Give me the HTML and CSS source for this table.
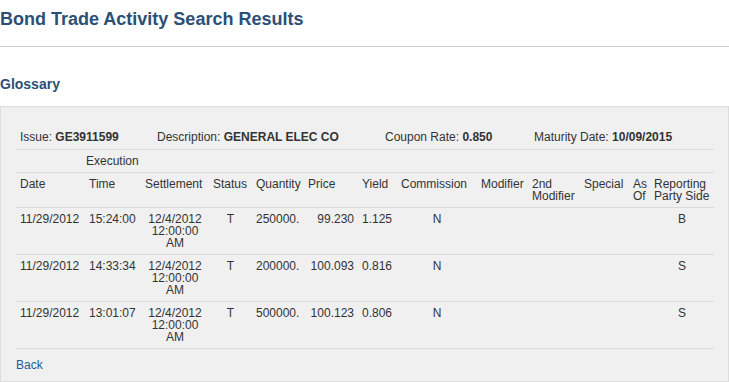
FILE: index.html
```html
<!DOCTYPE html>
<html>
<head>
	<title>Bond Trade Activity Search Results</title>
	<link rel="stylesheet" href="styles.css">
</head>
<body>
	<h1 class="page-title">Bond Trade Activity Search Results</h1>
	<h2 class="glossary">Glossary</h2>

	<div class="results">
		<table class="trades">
			<colgroup>
				<col style="width:69px">
				<col style="width:56px">
				<col style="width:68px">
				<col style="width:43px">
				<col style="width:52px">
				<col style="width:54px">
				<col style="width:39px">
				<col style="width:80px">
				<col style="width:51px">
				<col style="width:52px">
				<col style="width:49px">
				<col style="width:21px">
				<col style="width:64px">
			</colgroup>
			<tr class="issue-row">
				<td colspan="13">
					<div class="issue">
						<span class="issue-item issue-id">Issue: <b>GE3911599</b></span>
						<span class="issue-item issue-desc">Description: <b>GENERAL ELEC CO</b></span>
						<span class="issue-item issue-coupon">Coupon Rate: <b>0.850</b></span>
						<span class="issue-item">Maturity Date: <b>10/09/2015</b></span>
					</div>
				</td>
			</tr>
			<tr class="head-top">
				<th></th>
				<th class="exec">Execution</th>
				<th colspan="11"></th>
			</tr>
			<tr class="head">
				<th>Date</th>
				<th>Time</th>
				<th>Settlement</th>
				<th>Status</th>
				<th>Quantity</th>
				<th>Price</th>
				<th>Yield</th>
				<th>Commission</th>
				<th>Modifier</th>
				<th>2nd Modifier</th>
				<th>Special</th>
				<th>As Of</th>
				<th>Reporting Party Side</th>
			</tr>
			<tr>
				<td>11/29/2012</td>
				<td>15:24:00</td>
				<td class="center">12/4/2012 12:00:00 AM</td>
				<td class="center">T</td>
				<td>250000.</td>
				<td class="right">99.230</td>
				<td>1.125</td>
				<td class="center">N</td>
				<td></td>
				<td></td>
				<td></td>
				<td></td>
				<td class="center">B</td>
			</tr>
			<tr>
				<td>11/29/2012</td>
				<td>14:33:34</td>
				<td class="center">12/4/2012 12:00:00 AM</td>
				<td class="center">T</td>
				<td>200000.</td>
				<td class="right">100.093</td>
				<td>0.816</td>
				<td class="center">N</td>
				<td></td>
				<td></td>
				<td></td>
				<td></td>
				<td class="center">S</td>
			</tr>
			<tr>
				<td>11/29/2012</td>
				<td>13:01:07</td>
				<td class="center">12/4/2012 12:00:00 AM</td>
				<td class="center">T</td>
				<td>500000.</td>
				<td class="right">100.123</td>
				<td>0.806</td>
				<td class="center">N</td>
				<td></td>
				<td></td>
				<td></td>
				<td></td>
				<td class="center">S</td>
			</tr>
		</table>
		<a class="back" href="#">Back</a>
	</div>
</body>
</html>
```

FILE: styles.css
```css
body{
	margin:0;
	font-family:"Liberation Sans", Arial, sans-serif;
	color:#333;
	background-color:#fff;
}
.page-title{
	margin:8px 0 0 0;
	padding-bottom:16px;
	font-size:18px;
	line-height:22px;
	color:#2b4f76;
	border-bottom:1px solid #cccccc;
}
.glossary{
	margin:29px 0 14px 0;
	font-size:14px;
	line-height:16px;
	color:#2b4f76;
}
.results{
	background-color:#f0f0f0;
	border:1px solid #dddddd;
	padding:19px 14px 0 15px;
	height:255px;
}
.trades{
	table-layout:fixed;
	width:698px;
	border-collapse:collapse;
	font-size:12px;
	line-height:12px;
}
.trades td,
.trades th{
	padding:5px 4px;
	text-align:left;
	vertical-align:top;
	font-weight:normal;
	border-bottom:1px solid #dadada;
}
.issue-row td{
	padding-bottom:6px;
}
.issue{
	display:flex;
}
.issue-item{
	white-space:nowrap;
}
.issue-id{
	width:137px;
}
.issue-desc{
	width:228px;
}
.issue-coupon{
	width:149px;
}
.trades .center{
	text-align:center;
}
.trades .right{
	text-align:right;
}
/* wider than its column, so pull it left to sit centred */
.trades .exec{
	padding-left:1px;
	white-space:nowrap;
}
.back{
	display:inline-block;
	margin-top:9px;
	font-size:12px;
	line-height:14px;
	color:#1e5c97;
	text-decoration:none;
}
```
